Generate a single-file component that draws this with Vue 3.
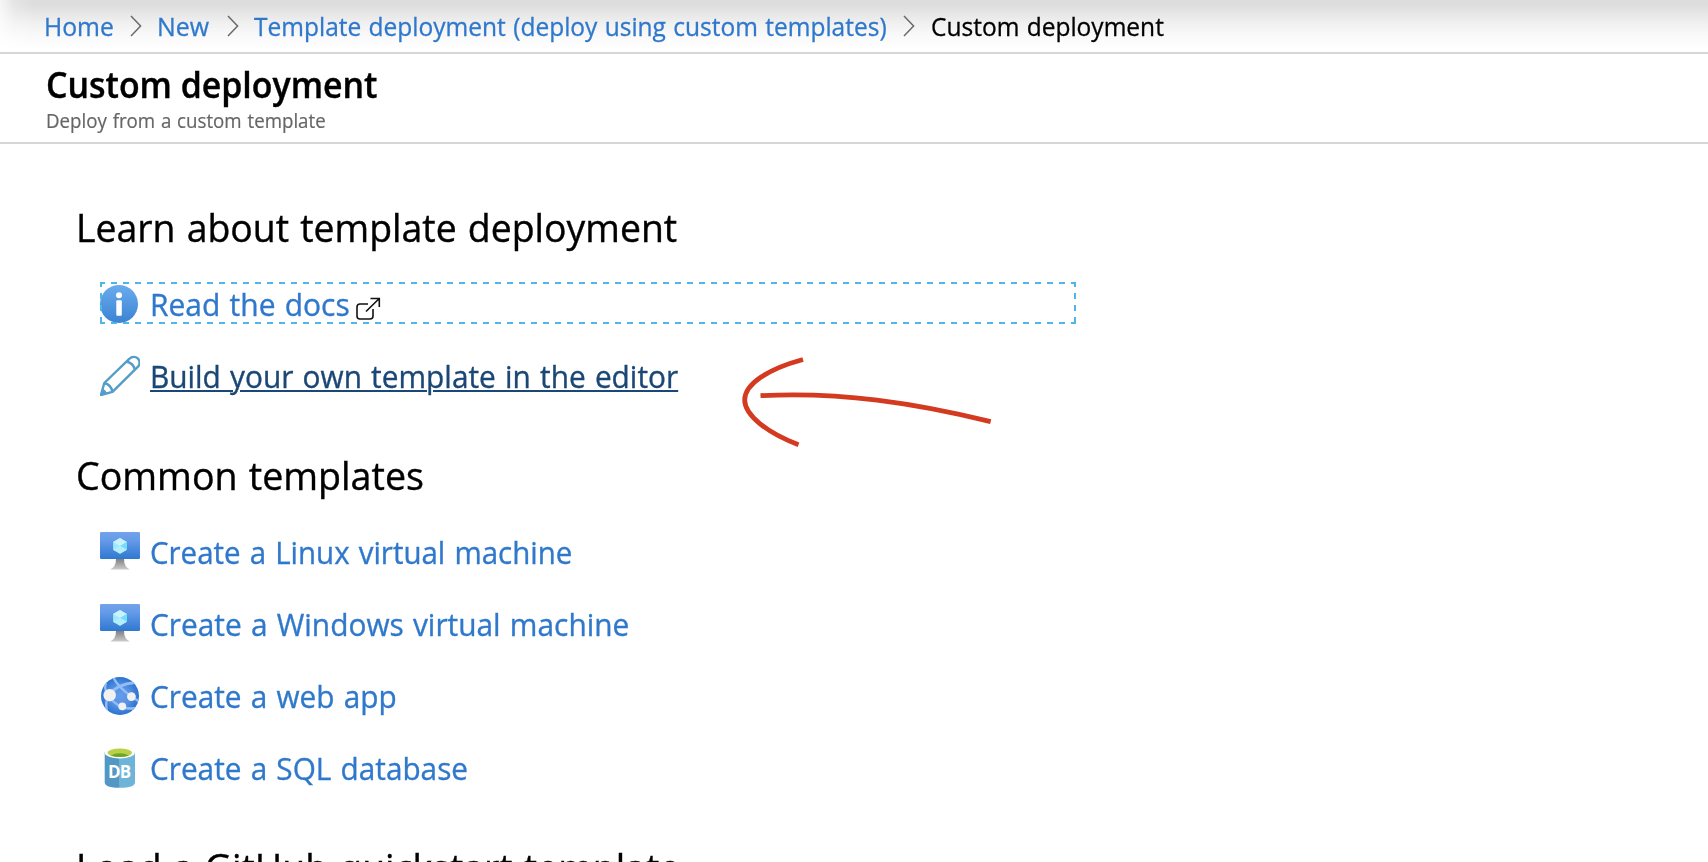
<script setup>
const crumbs = [
  { text: 'Home', w: 'c-home' },
  { text: 'New', w: 'c-new' },
  { text: 'Template deployment (deploy using custom templates)', w: 'c-template' },
]

// `fit` condenses each label horizontally
const templates = [
  { text: 'Create a Linux virtual machine', icon: 'vm', fit: 0.951 },
  { text: 'Create a Windows virtual machine', icon: 'vm', fit: 0.963 },
  { text: 'Create a web app', icon: 'web', fit: 0.961 },
  { text: 'Create a SQL database', icon: 'sql', fit: 0.96 },
]
</script>

<template>
  <div class="page">
    <nav class="breadcrumb">
      <div class="shade"></div>
      <template v-for="c in crumbs" :key="c.text">
        <a class="crumb" :class="c.w">{{ c.text }}</a>
        <svg class="chevron" width="12" height="22" viewBox="0 0 12 22">
          <path d="M1 1 L10.6 11 L1 21" fill="none" stroke="#6a6a6a" stroke-width="1.5" />
        </svg>
      </template>
      <span class="crumb current">Custom deployment</span>
    </nav>

    <header class="header">
      <h1>Custom deployment</h1>
      <p>Deploy from a custom template</p>
    </header>

    <main class="content">
      <h2>Learn about template deployment</h2>
      <ul>
        <li>
          <svg class="icon" width="40" height="42" viewBox="0 0 40 42">
            <defs>
              <linearGradient id="info-fill" x1="0" y1="0" x2="0" y2="1">
                <stop offset="0" stop-color="#6aaced" />
                <stop offset="1" stop-color="#3a82d4" />
              </linearGradient>
            </defs>
            <circle cx="19" cy="22" r="19" fill="url(#info-fill)" />
            <circle cx="19" cy="13.3" r="3" fill="#fff" />
            <rect x="16.3" y="18.3" width="5.5" height="15.4" rx="1" fill="#fff" />
          </svg>
          <a class="link docs">Read the docs</a>
          <svg class="external" width="26" height="24" viewBox="0 0 26 24">
            <path d="M13 7 H5 Q2 7 2 10 V19 Q2 22 5 22 H15 Q18 22 18 19 V12" fill="none" stroke="#111" stroke-width="1.6" />
            <path d="M11 14.5 L24 1.7 M15.5 1.5 H24.3 V10" fill="none" stroke="#111" stroke-width="1.6" />
          </svg>
          <svg class="focus" width="976" height="42" viewBox="0 0 976 42">
            <path d="M0 1 H976 M0 41 H976" />
            <path d="M1 0 V42 M975 0 V42" />
          </svg>
        </li>
        <li>
          <svg class="icon" width="40" height="42" viewBox="0 0 40 42">
            <g fill="none" stroke="#559dc9" stroke-width="2.4" stroke-linejoin="round">
              <path d="M1 41 L4.3 29 L29.5 4.7 A5.8 5.8 0 0 1 38 12.7 L12.5 37.8 Z" />
              <path d="M4.3 29 Q11 30.5 12.5 37.8 M26.5 7.5 Q33 9 35 15.6" />
            </g>
            <path d="M0.5 41.5 L2.3 34.8 Q6 36 7 39.7 Z" fill="#559dc9" />
          </svg>
          <a class="link hovered">Build your own template in the editor</a>
          <svg class="arrow" width="260" height="100" viewBox="738 352 260 100">
            <g fill="none" stroke="#d33a20" stroke-width="4.8">
              <path d="M803 359.5 C768 369 744.7 384 744.7 400 C744.7 415 767 433 798.5 444.7" />
              <path d="M760.5 395.7 C840 391.5 915 403 990.7 421.6" />
            </g>
          </svg>
        </li>
      </ul>

      <h2 class="common">Common templates</h2>
      <ul>
        <li v-for="(t, i) in templates" :key="t.text">
          <svg v-if="t.icon === 'vm'" class="icon" width="40" height="42" viewBox="0 0 40 42">
            <defs>
              <linearGradient :id="'screen' + i" x1="0" y1="0" x2="0" y2="1">
                <stop offset="0" stop-color="#72a3ea" />
                <stop offset="0.3" stop-color="#659bea" />
                <stop offset="1" stop-color="#2f78d0" />
              </linearGradient>
              <linearGradient :id="'stand' + i" x1="0" y1="0" x2="0" y2="1">
                <stop offset="0" stop-color="#808080" />
                <stop offset="1" stop-color="#cccccc" />
              </linearGradient>
            </defs>
            <path d="M16 29 H24 Q24 37 30 39.5 H10 Q16 37 16 29 Z" :fill="'url(#stand' + i + ')'" />
            <rect x="0" y="2" width="40" height="27" rx="1.2" :fill="'url(#screen' + i + ')'" />
            <path d="M20 8 L26.8 12 V19.7 L20 23.7 L13.1 19.7 V12 Z" fill="#9eeafd" />
            <path d="M20 8 L26.8 12 L20 15.9 L13.1 12 Z" fill="#c9f2fe" />
            <path d="M20 15.9 L26.8 12 V19.7 Z" fill="#6fe0fb" />
            <path d="M20 15.9 L13.1 19.7 L20 23.7 L26.8 19.7 Z" fill="#b5edfd" />
          </svg>
          <svg v-else-if="t.icon === 'web'" class="icon" width="40" height="42" viewBox="0 0 40 42">
            <defs>
              <radialGradient id="globe">
                <stop offset="0" stop-color="#659dea" />
                <stop offset="0.55" stop-color="#5690e3" />
                <stop offset="1" stop-color="#2b73cf" />
              </radialGradient>
              <clipPath id="globe-clip"><circle cx="20" cy="22" r="19" /></clipPath>
            </defs>
            <circle cx="20" cy="22" r="19" fill="url(#globe)" />
            <g clip-path="url(#globe-clip)" fill="none" stroke="#92bdf5" stroke-width="2.4">
              <path d="M9 21 Q17 10 35 8.5" stroke-width="3" />
              <path d="M13 3 Q18 13 31.5 22.5 L39 27.5" />
              <path d="M9 23 Q18 33 25 34 T36 34" />
              <path d="M8 22 Q5 29 7 37 M7 19 Q4 14 6 9" />
            </g>
            <circle cx="9.7" cy="21.2" r="6.2" fill="#f1f1f1" />
            <circle cx="31.4" cy="22.6" r="4.4" fill="#f1f1f1" />
            <circle cx="22.3" cy="32.3" r="3.9" fill="#f1f1f1" />
          </svg>
          <svg v-else class="icon" width="40" height="42" viewBox="0 0 40 42">
            <path d="M4.7 6 V36.5 Q5 41.8 19.8 41.8 V6 Z" fill="#5398c4" />
            <path d="M19.8 6 V41.8 Q34.8 41.8 35 36.5 V6 Z" fill="#6db5d8" />
            <ellipse cx="19.8" cy="6.8" rx="15.1" ry="5.6" fill="#fff" />
            <ellipse cx="19.8" cy="6.8" rx="12.2" ry="4.2" fill="#b8d145" />
            <path d="M10.5 9.4 Q19.8 5.3 29 9.4 Q19.8 12.5 10.5 9.4 Z" fill="#6ca62d" />
            <text class="db" x="19.3" y="31.6" text-anchor="middle">DB</text>
          </svg>
          <a class="link" :style="{ transform: `scaleX(${t.fit})` }">{{ t.text }}</a>
        </li>
      </ul>

      <h2 class="load">Load a GitHub quickstart template</h2>
    </main>
  </div>
</template>

<style>
body {
  overflow: hidden;
}
</style>

<style scoped>
.page {
  width: 100%;
  height: 862px;
  overflow: hidden;
  background: #fff;
  color: #000;
  font-family: "Open Sans", "Noto Sans", sans-serif;
  white-space: nowrap;
}
.breadcrumb {
  position: relative;
  display: flex;
  align-items: center;
  height: 52px;
  padding-left: 44px;
  border-bottom: 2px solid #d6d6d6;
  font-size: 26px;
  line-height: 53px;
}
.shade {
  position: absolute;
  inset: 0;
  background: linear-gradient(#dcdcdc 0, #dedede 6px, #e7e7e7 14px, #f1f1f1 24px, #f9f9f9 35px, #fff 50px);
  -webkit-mask-image: linear-gradient(90deg, rgba(0, 0, 0, 0.25), rgba(0, 0, 0, 0.75) 14px, #000 34px);
  mask-image: linear-gradient(90deg, rgba(0, 0, 0, 0.25), rgba(0, 0, 0, 0.75) 14px, #000 34px);
}
.crumb {
  position: relative;
  flex: none;
  color: #2f78cc;
  word-spacing: 1px;
  -webkit-text-stroke: 0.3px currentColor;
  transform: scaleX(0.943);
  transform-origin: 0 0;
}
/* The box keeps its layout width while the glyphs are condensed from the left edge. */
.c-home { width: 86px; transform: scaleX(0.951); }
.c-new { width: 70px; transform: scaleX(0.957); }
.c-template { width: 649px; }
.crumb.current {
  color: #000;
  margin-left: 1px;
}
.chevron {
  position: relative;
  flex: none;
  margin-right: 15px;
}
.header {
  height: 79px;
  padding: 9px 0 0 46px;
  border-bottom: 2px solid #d6d6d6;
}
h1 {
  margin: 0;
  font-size: 36px;
  line-height: 44px;
  font-weight: 600;
  -webkit-text-stroke: 0.4px currentColor;
  transform: scaleX(0.941);
  transform-origin: 0 0;
}
.header p {
  margin: 1px 0 0;
  color: #666;
  font-size: 20px;
  line-height: 26px;
  word-spacing: 1px;
  -webkit-text-stroke: 0.2px currentColor;
  transform: scaleX(0.935);
  transform-origin: 0 0;
}
.content {
  padding: 56px 0 0 76px;
}
h2 {
  width: max-content;
  margin: 0 0 28px;
  font-size: 39px;
  line-height: 54px;
  font-weight: 400;
  word-spacing: 1.5px;
  -webkit-text-stroke: 0.4px currentColor;
  transform: scaleX(0.959);
  transform-origin: 0 0;
}
h2.common {
  transform: scaleX(0.964);
}
ul {
  display: grid;
  gap: 30px;
  margin: 0 0 52px;
  padding: 0 0 0 24px;
  list-style: none;
}
li {
  position: relative;
  display: flex;
  height: 42px;
}
.icon {
  flex: none;
  margin-right: 10px;
}
.link {
  flex: none;
  padding-top: 1px;
  color: #2f78cc;
  font-size: 31px;
  line-height: 42px;
  word-spacing: 1.5px;
  -webkit-text-stroke: 0.35px currentColor;
  transform: scaleX(0.962);
  transform-origin: 0 0;
}
.link.docs {
  width: 200px;
  transform: scaleX(0.967);
}
.link.hovered {
  color: #1a4775;
  text-decoration: underline;
  text-decoration-thickness: 2px;
  text-underline-offset: 2px;
}
.external {
  margin: 15px 0 0 5px;
}
.focus {
  position: absolute;
  left: 0;
  top: 0;
}
.focus path {
  fill: none;
  stroke: #50b6ea;
  stroke-width: 2;
  stroke-dasharray: 6 6;
  stroke-dashoffset: 1;
}
.arrow {
  position: absolute;
  left: 638px;
  top: -2px;
}
.db {
  fill: #fff;
  font-size: 17px;
  font-weight: 700;
  letter-spacing: -0.6px;
}
</style>
